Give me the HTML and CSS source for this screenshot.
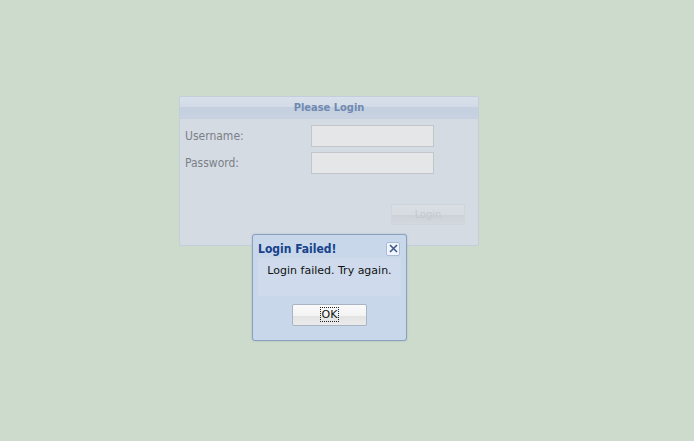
FILE: index.html
```html
<!DOCTYPE html>
<html>
<head>
<meta charset="utf-8">
<link rel="stylesheet" href="styles.css">
</head>
<body>
<div class="stage">
  <div class="panel">
    <div class="panel-head">Please Login</div>
    <div class="panel-body">
      <div class="row"><label>Username:</label><div class="field"></div></div>
      <div class="row"><label>Password:</label><div class="field"></div></div>
      <div class="actions"><div class="btn disabled">Login</div></div>
    </div>
  </div>
  <div class="dialog">
    <div class="dlg-head"><span>Login Failed!</span><span class="close"><svg width="9" height="9" viewBox="0 0 9 9"><path d="M1 1L8 8M8 1L1 8" stroke="#3d5a8c" stroke-width="1.6"/></svg></span></div>
    <div class="dlg-body">Login failed. Try again.</div>
    <div class="dlg-foot"><div class="btn ok"><span class="focus">OK</span></div></div>
  </div>
</div>
</body>
</html>
```
FILE: styles.css
```css
html, body { margin: 0; padding: 0; }
body { background: #cddbcd; font-family: "DejaVu Sans", Tahoma, sans-serif; font-size: 11px; width: 694px; height: 441px; overflow: hidden; }
.stage { position: relative; width: 694px; height: 441px; }
.panel { position: absolute; left: 179px; top: 96px; width: 298px; height: 148px; border: 1px solid #c4cddb; border-radius: 2px; background: #d5dbe3; }
.panel-head { height: 21px; line-height: 22px; text-align: center; font-weight: bold; color: #7089b2; font-size: 11px; font-family: "DejaVu Sans Condensed", "DejaVu Sans", sans-serif; background: linear-gradient(#d8e0ea, #d1dae6 50%, #c4cfdf 50%, #c8d2e1); border-bottom: 1px solid #c6d0de; }
.panel-body { padding: 6px 0 0 5px; }
.row { display: flex; align-items: center; height: 22px; margin-bottom: 5px; }
.row label { width: 126px; color: #7b8087; font-size: 12px; font-family: "DejaVu Sans Condensed", "DejaVu Sans", sans-serif; }
.field { width: 121px; height: 20px; border: 1px solid #c2c5cc; background: #e5e6e8; }
.actions { display: flex; justify-content: flex-end; padding: 25px 13px 0 0; }
.btn { width: 72px; height: 19px; line-height: 19px; text-align: center; border: 1px solid #d0d4db; border-radius: 2px; font-size: 11px; }
.btn.disabled { color: #c4c8cf; font-family: "DejaVu Sans Condensed", "DejaVu Sans", sans-serif; background: linear-gradient(#d9dee5, #d6dbe2 55%, #cdd2da 55%, #d3d8df); }
.dialog { position: absolute; left: 252px; top: 234px; width: 153px; height: 105px; border: 1px solid #8aa0c0; border-radius: 3px; background: #c9d7ea; box-shadow: 0 0 2px rgba(60,80,110,0.25); }
.dlg-head { display: flex; justify-content: space-between; align-items: center; padding: 4px 6px 0 5px; height: 19px; font-weight: bold; font-size: 12px; color: #15428b; font-family: "DejaVu Sans Condensed", "DejaVu Sans", sans-serif; }
.close { width: 12px; height: 12px; border: 1px solid #a9bcd8; border-radius: 2px; background: #f1f5fb; display: flex; align-items: center; justify-content: center; }
.dlg-body { margin: 0 5px; height: 38px; line-height: 26px; text-align: center; background: #cfdbec; color: #111; font-size: 11px; }
.dlg-foot { display: flex; justify-content: center; padding-top: 8px; }
.btn.ok { width: 73px; height: 20px; line-height: 19px; border: 1px solid #a9b4c2; background: linear-gradient(#fafafa, #f3f3f3 55%, #e3e3e3 55%, #ebebeb); color: #111; }
.focus { outline: 1px dotted #222; padding: 0 1px; }
```
